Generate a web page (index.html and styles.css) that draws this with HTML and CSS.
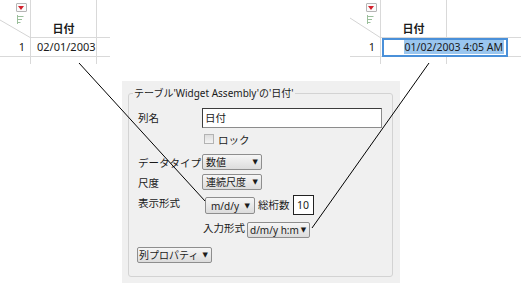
FILE: index.html
```html
<!DOCTYPE html>
<html lang="ja">
<head>
    <meta charset="UTF-8">
    <title>日付の列情報</title>
    <link rel="stylesheet" href="styles.css">
</head>
<body>
    <div class="top">
        <div class="table">
            <div class="cell corner">
                <svg class="diag" width="31" height="38"><line x1="0" y1="20" x2="31" y2="38" stroke="#d4d4d4" stroke-width="1"/></svg>
                <span class="menu-btn"><span class="tri"></span></span>
                <svg class="rows-icon" width="7" height="9"><path d="M0.5 0 V9 M1 1.5 H6.5 M1 4.5 H5 M1 7.5 H3.5" stroke="#9bbf9b" stroke-width="1" fill="none"/></svg>
            </div>
            <div class="cell head">日付</div>
            <div class="cell filler"></div>
            <div class="cell rownum">1</div>
            <div class="cell data">02/01/2003</div>
            <div class="cell filler"></div>
            <div class="cell tail"></div>
            <div class="cell tail"></div>
            <div class="cell tail last"></div>
        </div>

        <div class="table right">
            <div class="cell corner">
                <svg class="diag" width="31" height="38"><line x1="0" y1="18" x2="31" y2="38" stroke="#d4d4d4" stroke-width="1"/></svg>
                <span class="menu-btn"><span class="tri"></span></span>
                <svg class="rows-icon" width="7" height="9"><path d="M0.5 0 V9 M1 1.5 H6.5 M1 4.5 H5 M1 7.5 H3.5" stroke="#9bbf9b" stroke-width="1" fill="none"/></svg>
            </div>
            <div class="cell head">日付</div>
            <div class="cell filler"></div>
            <div class="cell rownum">1</div>
            <div class="cell data"></div>
            <div class="cell filler"></div>
            <div class="cell tail"></div>
            <div class="cell tail"></div>
            <div class="cell tail last"></div>
            <div class="edit"><span class="sel">01/02/2003 4:05 AM</span></div>
        </div>
    </div>

    <div class="dialog">
        <fieldset class="group">
            <legend>テーブル'Widget Assembly'の'日付'</legend>

            <div class="row r-name">
                <span class="label">列名</span>
                <span class="text-input">日付</span>
            </div>
            <div class="row r-lock">
                <span class="label"></span>
                <span class="check"></span><span class="check-text">ロック</span>
            </div>
            <div class="row r-type">
                <span class="label">データタイプ</span>
                <span class="combo w60">数値<i class="arrow">▼</i></span>
            </div>
            <div class="row r-scale">
                <span class="label">尺度</span>
                <span class="combo w60">連続尺度<i class="arrow">▼</i></span>
            </div>
            <div class="row r-format">
                <span class="label">表示形式</span>
                <span class="combo w50 latin">m/d/y<i class="arrow">▼</i></span>
                <span class="small-label">総桁数</span>
                <span class="num-box">10</span>
            </div>
            <div class="row r-input">
                <span class="in-label">入力形式</span>
                <span class="combo w63 latin">d/m/y h:m<i class="arrow">▼</i></span>
            </div>
            <div class="row r-props">
                <span class="combo w75">列プロパティ<i class="arrow">▼</i></span>
            </div>
        </fieldset>
    </div>

    <!-- 引き出し線 -->
    <svg class="leaders" width="521" height="286">
        <line x1="79" y1="63" x2="205" y2="201" stroke="#000" stroke-width="1"/>
        <line x1="429" y1="63" x2="312" y2="228" stroke="#000" stroke-width="1"/>
    </svg>
</body>
</html>
```

FILE: styles.css
```css
body {
    margin: 0;
    width: 521px;
    height: 286px;
    position: relative;
    overflow: hidden;
    background: #fff;
    color: #1a1a1a;
    font-family: "Noto Sans", "Noto Sans CJK JP", sans-serif;
    font-size: 11px;
}
.top {
    display: flex;
    height: 64px;
}
.table {
    display: grid;
    grid-template-columns: 31px 66px 13px;
    grid-template-rows: 38px 19px 7px;
    position: relative;
}
.table.right {
    margin-left: 240px;
    grid-template-columns: 31px 66px 74px;
}
.cell {
    box-sizing: border-box;
    border-right: 1px solid #d9d9d9;
    border-bottom: 1px solid #d9d9d9;
    position: relative;
}
.cell.filler,
.cell.last {
    border-right: none;
}
.cell.tail {
    border-bottom: none;
}
.corner {
    border-bottom: none;
}
.diag {
    position: absolute;
    left: 0;
    top: 0;
}
.menu-btn {
    position: absolute;
    left: 16px;
    top: 3px;
    width: 9px;
    height: 7px;
    border: 1px solid #b5b5b5;
    border-radius: 1px;
    background: #fafafa;
}
.tri {
    position: absolute;
    left: 1px;
    top: 2px;
    border-left: 3.5px solid transparent;
    border-right: 3.5px solid transparent;
    border-top: 4px solid #d4202c;
}
.rows-icon {
    position: absolute;
    left: 17px;
    top: 15px;
}
.head {
    font-weight: bold;
    display: flex;
    align-items: flex-end;
    justify-content: center;
    padding-bottom: 1px;
    font-size: 11px;
}
.rownum {
    text-align: right;
    padding-right: 5px;
    line-height: 18px;
}
.data {
    padding-left: 6px;
    line-height: 18px;
    white-space: nowrap;
}
.edit {
    position: absolute;
    left: 32px;
    top: 38px;
    width: 126px;
    height: 19px;
    box-sizing: border-box;
    border: 2px solid #4a90d9;
    background: #fff;
    text-align: right;
    padding-right: 2px;
    line-height: 15px;
    white-space: nowrap;
    font-size: 10.5px;
}
.sel {
    background: #9ac6ef;
    padding: 0 1px;
}

/* ダイアログ */
.dialog {
    margin: 17px 0 0 122px;
    width: 278px;
    height: 202px;
    box-sizing: border-box;
    background: #f0f0f0;
    padding: 5px 7px 6px 6px;
    font-size: 10.5px;
}
.group {
    margin: 0;
    height: 100%;
    box-sizing: border-box;
    border: 1px solid #d3d3d3;
    border-radius: 3px;
    padding: 7px 0 0 9px;
}
.group legend {
    margin-left: -5px;
    padding: 0 1px;
    line-height: 14px;
    font-size: 10px;
    white-space: nowrap;
}
.row {
    display: flex;
    align-items: center;
    height: 20px;
    white-space: nowrap;
}
.label {
    width: 64px;
    flex: none;
}
.r-name {
    height: 21px;
}
.text-input {
    width: 180px;
    height: 20px;
    box-sizing: border-box;
    border: 1px solid #3c3c3c;
    border-bottom-color: #8c8c8c;
    border-right-color: #8c8c8c;
    background: #fff;
    padding-left: 2px;
    line-height: 18px;
}
.r-lock {
    margin-top: 1px;
}
.check {
    width: 10px;
    height: 10px;
    box-sizing: border-box;
    border: 1px solid #b3b3b3;
    background: linear-gradient(#dedede, #f4f4f4);
    margin: 0 4px 0 2px;
}
.check-text {
    color: #222;
}
.combo {
    height: 16px;
    box-sizing: border-box;
    border: 1px solid #8e8e8e;
    border-radius: 2px;
    background: linear-gradient(#f6f6f6, #dcdcdc);
    display: inline-flex;
    align-items: center;
    justify-content: space-between;
    padding: 0 3px 0 3px;
    line-height: 14px;
    white-space: nowrap;
    font-size: 10px;
}
.arrow {
    font-family: "DejaVu Sans", sans-serif;
    font-style: normal;
    font-size: 7px;
    margin-left: 2px;
}
.w60 { width: 60px; }
.w50 { width: 50px; padding: 0 4px 0 5px; }
.w63 { width: 63px; padding-left: 2px; }
.w75 { width: 75px; padding-left: 1px; }
.latin {
    font-family: "Noto Sans", sans-serif;
    font-size: 10px;
}
.r-type { margin-top: 3px; }
.r-format {
    height: 24px;
    margin-top: 2px;
    align-items: flex-start;
}
.r-format .label {
    margin-top: 1px;
}
.r-format .combo {
    height: 17px;
    margin: 3px 3px 0 3px;
}
.small-label {
    margin-top: 3px;
}
.num-box {
    width: 21px;
    height: 20px;
    box-sizing: border-box;
    border: 1px solid #222;
    background: #fff;
    margin-left: 3px;
    margin-top: 1px;
    text-align: center;
    line-height: 18px;
    font-family: "Noto Sans", sans-serif;
}
.r-input {
    margin-top: 2px;
    padding-left: 65px;
    align-items: flex-start;
}
.in-label {
    margin-right: 2px;
}
.r-input .combo {
    margin-top: 2px;
}
.r-props {
    margin-top: 5px;
    margin-left: -1px;
}
.leaders {
    position: absolute;
    left: 0;
    top: 0;
    pointer-events: none;
}
```
